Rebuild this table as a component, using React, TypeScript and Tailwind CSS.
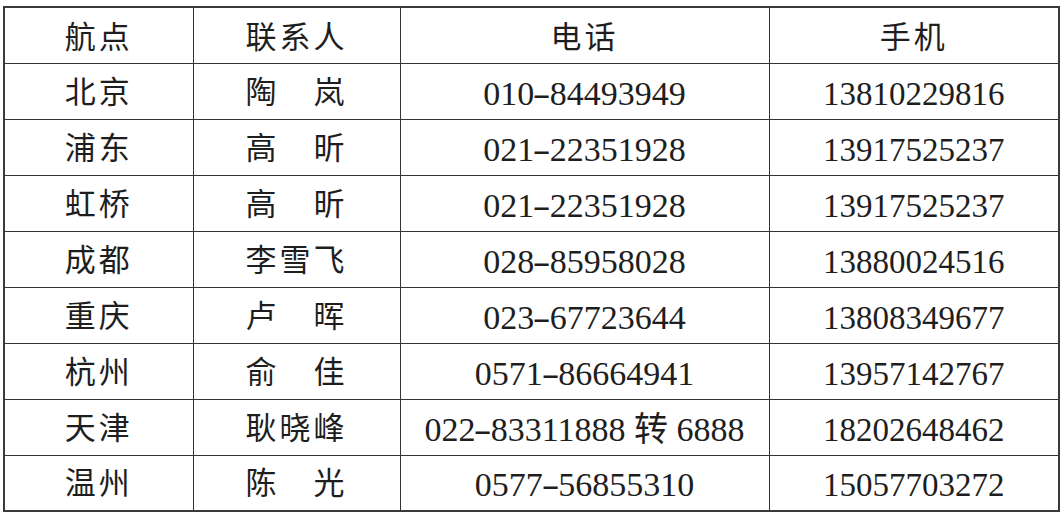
const rows = [
  { city: "北京", name: "陶\u3000岚", tel: "010-84493949", mobile: "13810229816" },
  { city: "浦东", name: "高\u3000昕", tel: "021-22351928", mobile: "13917525237" },
  { city: "虹桥", name: "高\u3000昕", tel: "021-22351928", mobile: "13917525237" },
  { city: "成都", name: "李雪飞", tel: "028-85958028", mobile: "13880024516" },
  { city: "重庆", name: "卢\u3000晖", tel: "023-67723644", mobile: "13808349677" },
  { city: "杭州", name: "俞\u3000佳", tel: "0571-86664941", mobile: "13957142767" },
  { city: "天津", name: "耿晓峰", tel: "022-83311888 转 6888", mobile: "18202648462" },
  { city: "温州", name: "陈\u3000光", tel: "0577-56855310", mobile: "15057703272" },
];

const font = "font-['Liberation_Serif','Noto_Sans_CJK_SC',serif]";
const cell = "border-[1.5px] border-[#333] p-0 text-center align-middle leading-[40px]";

// the scan's dash is a long thin stroke, wider than a Times hyphen
function Tel({ value }: { value: string }) {
  const i = value.indexOf("-");
  return (
    <>
      {value.slice(0, i)}
      <span className="inline-block scale-x-[1.6] px-[2px]">-</span>
      {value.slice(i + 1)}
    </>
  );
}

export default function App() {
  return (
    <div className={`h-[522px] w-[1064px] bg-white pl-[3px] pt-[6px] text-[#1e1e1e] ${font}`}>
      <table className="w-[1055px] table-fixed border-collapse border-2 border-[#3a3a3a]">
        <colgroup>
          <col className="w-[189px]" />
          <col className="w-[207px]" />
          <col className="w-[369px]" />
          <col className="w-[290px]" />
        </colgroup>
        <thead>
          <tr className="h-[56px] text-[31px] tracking-[3px]">
            <th className={`${cell} pt-[6px] font-normal`}>航点</th>
            <th className={`${cell} pt-[6px] font-normal`}>联系人</th>
            <th className={`${cell} pt-[6px] font-normal`}>电话</th>
            <th className={`${cell} pt-[6px] font-normal`}>手机</th>
          </tr>
        </thead>
        <tbody>
          {rows.map((r) => (
            <tr key={r.city} className="h-[56px]">
              <td className={`${cell} pt-[3px] text-[31px] tracking-[3px]`}>{r.city}</td>
              <td className={`${cell} pt-[3px] text-[31px] tracking-[3px]`}>{r.name}</td>
              <td className={`${cell} pt-[5px] text-[34px]`}>
                <Tel value={r.tel} />
              </td>
              <td className={`${cell} pt-[5px] text-[33px]`}>{r.mobile}</td>
            </tr>
          ))}
        </tbody>
      </table>
    </div>
  );
}
